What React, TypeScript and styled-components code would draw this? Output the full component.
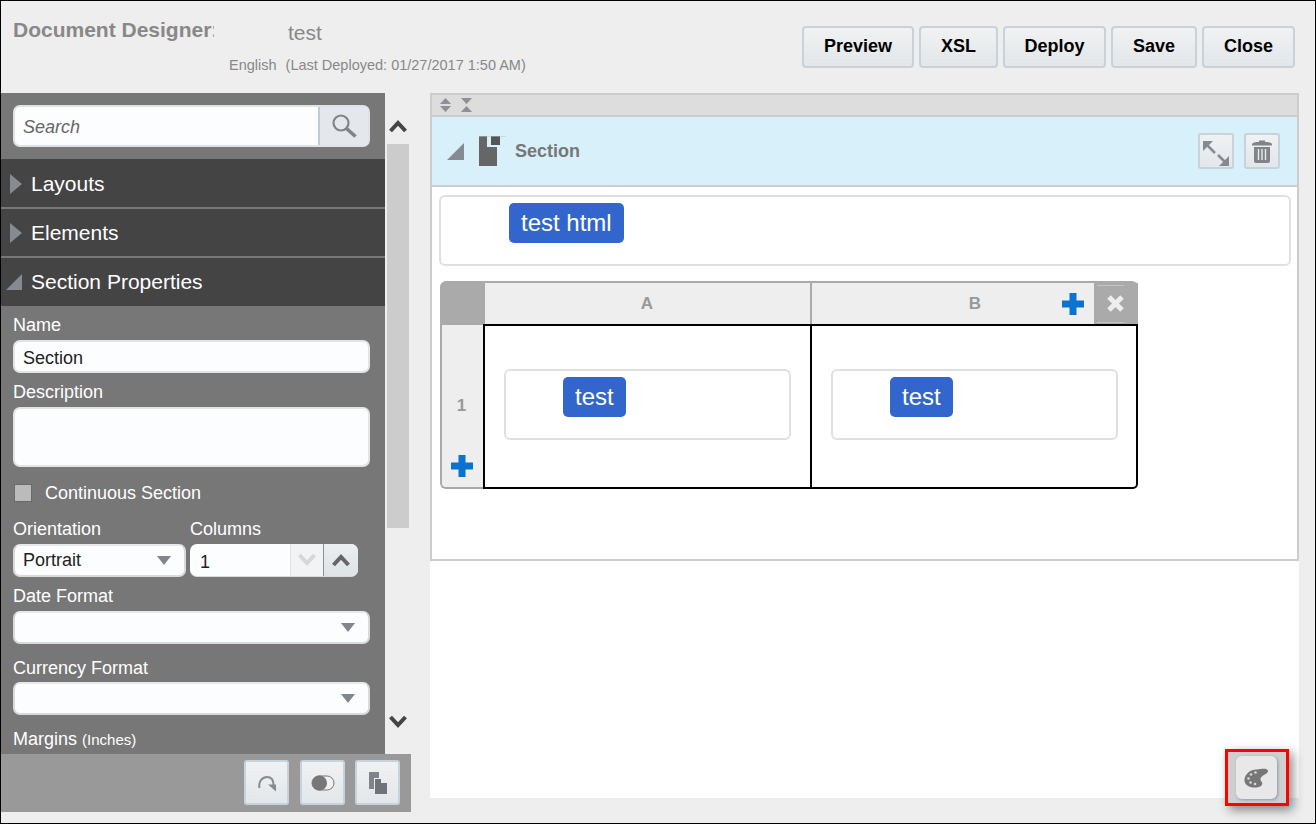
import React from 'react';
import styled, { createGlobalStyle } from 'styled-components';

const Global = createGlobalStyle`
  html, body { margin: 0; padding: 0; background: #eeeeee; }
  * { box-sizing: border-box; }
  body { font-family: "Liberation Sans", Arial, sans-serif; }
`;

const Page = styled.div`
  position: relative;
  width: 1316px;
  height: 824px;
  border: 1px solid #000;
  background: #eeeeee;
  overflow: hidden;
`;

const Header = styled.header`
  display: flex;
  height: 92px;
`;

const Title = styled.div`
  width: 213px;
  padding: 16px 0 0 12px;
  font-size: 21px;
  line-height: 26px;
  font-weight: 700;
  color: #888;
  white-space: nowrap;
  overflow: hidden;
`;

const Info = styled.div`
  padding: 19px 0 0 15px;
  flex: 1;
`;

const DocName = styled.div`
  padding-left: 59px;
  font-size: 21px;
  line-height: 26px;
  color: #888;
`;

const Meta = styled.div`
  margin-top: 9px;
  display: flex;
  gap: 9px;
  font-size: 14.5px;
  line-height: 20px;
  color: #888;
`;

const Actions = styled.div`
  display: flex;
  gap: 5px;
  margin: 25px 20px 0 0;
`;

const ActionButton = styled.button<{ $w: number }>`
  width: ${p => p.$w}px;
  height: 42px;
  padding: 0 0 2px;
  border: 2px solid #c8d2da;
  border-radius: 4px;
  background: linear-gradient(#f0f1f2, #e3e7ea);
  font-family: inherit;
  font-size: 18px;
  font-weight: 700;
  color: #000;
`;

const Main = styled.div`
  display: flex;
  height: 730px;
`;

const SideColumn = styled.div`
  width: 410px;
  display: flex;
  flex-direction: column;
`;

const SideTop = styled.div`
  display: flex;
  height: 661px;
`;

const Panel = styled.aside`
  width: 384px;
  background: #777;
  overflow: hidden;
`;

const SearchArea = styled.div`
  height: 66px;
  padding: 12px 15px 0 12px;
`;

const SearchBox = styled.div`
  display: flex;
  height: 42px;
  border: 2px solid #dfe3e7;
  border-radius: 7px;
  overflow: hidden;
  background: #fcfdff;
`;

const SearchText = styled.div`
  flex: 1;
  padding-left: 8px;
  font-size: 18px;
  line-height: 40px;
  font-style: italic;
  color: #666;
`;

const SearchButton = styled.div`
  width: 50px;
  display: flex;
  align-items: center;
  justify-content: center;
  background: #e4e8ec;
  border-left: 2px solid #bfccd6;
`;

const AccordionRow = styled.div<{ $h: number; $line?: boolean; $pad?: number }>`
  display: flex;
  align-items: center;
  height: ${p => p.$h}px;
  padding-top: ${p => p.$pad ?? 0}px;
  background: #444;
  border-bottom: ${p => (p.$line ? '2px solid #777' : '0')};
  color: #fff;
  font-size: 21px;
`;

const ArrowSlot = styled.span`
  width: 30px;
  display: flex;
  justify-content: flex-end;
  padding-right: 9px;
`;

const Form = styled.div`
  padding: 0 15px 0 12px;
  height: 448px;
  overflow: hidden;
`;

const Label = styled.div<{ $top: number; $bottom?: number }>`
  margin-top: ${p => p.$top}px;
  margin-bottom: ${p => p.$bottom ?? 3}px;
  font-size: 18px;
  line-height: 24px;
  color: #fff;
  white-space: nowrap;
`;

const Small = styled.span`
  font-size: 15px;
`;

const TextField = styled.div<{ $h: number }>`
  height: ${p => p.$h}px;
  padding-left: 8px;
  border: 2px solid #e2e4e6;
  border-radius: 7px;
  background: #fcfdff;
  font-size: 18px;
  line-height: 32px;
  color: #222;
`;

const SelectField = styled.div<{ $w?: number }>`
  width: ${p => (p.$w ? `${p.$w}px` : 'auto')};
  height: 33px;
  display: flex;
  align-items: center;
  justify-content: space-between;
  padding: 0 13px 0 8px;
  border: 2px solid #d8dbde;
  border-top-color: #e6e8ea;
  border-radius: 7px;
  background: #fcfdff;
  font-size: 18px;
  color: #222;
`;

const CheckRow = styled.div`
  display: flex;
  align-items: center;
  gap: 13px;
  height: 18px;
  margin-top: 17px;
  padding-left: 1px;
  font-size: 18px;
  color: #fff;
`;

const Check = styled.span`
  width: 18px;
  height: 18px;
  background: #bbb;
  border: 1px solid #6a6a6a;
`;

const TwoColumns = styled.div`
  display: flex;
  gap: 4px;
`;

const Spinner = styled.div`
  width: 168px;
  height: 33px;
  display: flex;
  border-radius: 7px;
  overflow: hidden;
  background: #fcfdff;
  border-bottom: 1px solid #d8dbde;
`;

const SpinnerValue = styled.div`
  width: 100px;
  padding: 6px 0 0 10px;
  font-size: 18px;
  line-height: 24px;
  color: #222;
`;

const SpinButton = styled.div<{ $on?: boolean }>`
  flex: ${p => (p.$on ? '0 0 35px' : '1')};
  display: flex;
  align-items: center;
  justify-content: center;
  background: ${p => (p.$on ? 'linear-gradient(#eceef0, #dfe3e6)' : '#f1f3f5')};
  border-left: ${p => (p.$on ? '1px solid #8f8f8f' : '1px solid #dde1e5')};
`;

const ScrollRail = styled.div`
  width: 26px;
  display: flex;
  flex-direction: column;
  align-items: center;
`;

const ScrollEnd = styled.div<{ $bottom?: boolean }>`
  height: ${p => (p.$bottom ? 'auto' : '51px')};
  flex: ${p => (p.$bottom ? 1 : 'none')};
  display: flex;
  align-items: ${p => (p.$bottom ? 'flex-end' : 'flex-start')};
  padding: ${p => (p.$bottom ? '0 0 25px' : '26px 0 0')};
`;

const ScrollThumb = styled.div`
  width: 22px;
  height: 384px;
  background: #ccc;
`;

const BottomBar = styled.div`
  height: 58px;
  display: flex;
  justify-content: flex-end;
  gap: 10px;
  padding: 6px 11px 0 0;
  background: #999;
`;

const ToolButton = styled.div`
  width: 45px;
  height: 45px;
  display: flex;
  align-items: center;
  justify-content: center;
  border: 2px solid #c8d2da;
  border-radius: 3px;
  background: linear-gradient(#f0f1f2, #e3e7ea);
  &:first-child { margin-right: 1px; }
`;

const Canvas = styled.main`
  width: 869px;
  height: 705px;
  margin-left: 19px;
  background: #fff;
`;

const Section = styled.section`
  height: 468px;
  border: 2px solid #ccc;
`;

const SectionTools = styled.div`
  height: 22px;
  display: flex;
  align-items: center;
  gap: 10px;
  padding-left: 8px;
  background: #ddd;
  border-bottom: 2px solid #ccc;
`;

const SectionHead = styled.div`
  height: 70px;
  display: flex;
  align-items: center;
  padding: 0 17px 0 15px;
  background: #d7f0fa;
  border-bottom: 2px solid #ccc;
`;

const SectionIcon = styled.svg`
  margin-left: 15px;
`;

const SectionName = styled.div`
  flex: 1;
  margin-left: 9px;
  font-size: 18px;
  font-weight: 700;
  color: #777;
`;

const HeadButton = styled.div`
  width: 36px;
  height: 36px;
  margin-left: 10px;
  display: flex;
  align-items: center;
  justify-content: center;
  border: 2px solid #c8d2da;
  border-radius: 3px;
  background: linear-gradient(#f0f1f2, #e3e7ea);
`;

const SectionBody = styled.div`
  padding: 8px 6px 0 7px;
`;

const DropBox = styled.div<{ $h: number; $l: number }>`
  height: ${p => p.$h}px;
  padding: 6px 0 0 ${p => p.$l}px;
  border: 2px solid #e0e0e0;
  border-radius: 6px;
  background: #fff;
`;

const Chip = styled.span`
  display: inline-block;
  height: 40px;
  padding: 0 12px;
  border-radius: 5px;
  background: #3366cc;
  color: #fff;
  font-size: 24px;
  line-height: 40px;
`;

const Table = styled.div`
  position: relative;
  width: 698px;
  margin: 15px 0 0 1px;
  display: grid;
  grid-template-columns: 44px 326px 328px;
  grid-template-rows: 43px 165px;
`;

const Corner = styled.div`
  position: relative;
  z-index: 1;
  background: #aaa;
  border-radius: 6px 0 0 0;
  height: 44px;
  width: 45px;
`;

const ColHead = styled.div<{ $last?: boolean }>`
  display: flex;
  align-items: center;
  justify-content: center;
  background: #eee;
  border-top: 2px solid #aaa;
  border-left: ${p => (p.$last ? '2px solid #aaa' : '0')};
  border-top-right-radius: ${p => (p.$last ? '6px' : '0')};
  font-size: 17px;
  font-weight: 700;
  color: #999;
`;

const RowHead = styled.div`
  display: flex;
  flex-direction: column;
  align-items: center;
  padding: 73px 3px 0 0;
  background: #eee;
  border-left: 2px solid #aaa;
  border-bottom: 2px solid #aaa;
  border-bottom-left-radius: 6px;
  font-size: 17px;
  font-weight: 700;
  line-height: 18px;
  color: #999;
`;

const RowPlus = styled.div`
  margin-top: 40px;
  height: 24px;
`;

const Grid = styled.div`
  grid-column: 2 / 4;
  display: grid;
  grid-template-columns: 326px 1fr;
  border: 2px solid #000;
  border-left-width: 1px;
  border-radius: 0 0 5px 0;
  margin-left: -1px;
  background: #fff;
  position: relative;
  z-index: 2;
`;

const Cell = styled.div`
  padding: 43px 0 0 19px;
  border-left: 2px solid #000;
  &:first-child { border-left: 1px solid #000; }
`;

const CellBox = styled.div`
  width: 287px;
`;

const ColPlus = styled.div`
  position: absolute;
  left: 622px;
  top: 12px;
  line-height: 0;
`;

const ColClose = styled.div`
  position: absolute;
  right: 0;
  top: 2px;
  width: 44px;
  height: 41px;
  display: flex;
  align-items: center;
  justify-content: center;
  padding-right: 2px;
  background: #aaa;
  &::before, &::after {
    content: "";
    position: absolute;
    left: 3px;
    width: 27px;
    height: 1px;
    background: #c4c4c4;
  }
  &::before { top: 2px; }
  &::after { bottom: 1px; }
`;

const PaletteFrame = styled.div`
  position: absolute;
  left: 1224px;
  top: 748px;
  width: 64px;
  height: 57px;
  display: flex;
  align-items: center;
  justify-content: center;
  border: 3px solid #f00;
  background: #cfcfcf;
  box-shadow: 4px 4px 10px rgba(0, 0, 0, 0.45);
`;

const PaletteButton = styled.div`
  width: 41px;
  height: 43px;
  margin-right: 1px;
  padding-right: 2px;
  display: flex;
  align-items: center;
  justify-content: center;
  border-radius: 6px;
  background: #e8e8e8;
  box-shadow: 1px 1px 3px rgba(110, 130, 150, 0.7);
`;

const Right = () => (
  <svg width="12" height="20" viewBox="0 0 12 20"><path d="M0 0L12 10L0 20Z" fill="#858b90" /></svg>
);
const Open = () => (
  <svg width="16" height="16" viewBox="0 0 16 16"><path d="M16 0V16H0Z" fill="#858b90" /></svg>
);
const Caret = () => (
  <svg width="14" height="9" viewBox="0 0 14 9"><path d="M0 0H14L7 9Z" fill="#7f868c" /></svg>
);
const Chevron = ({ up, color = '#444' }: { up: boolean; color?: string }) => (
  <svg width="18" height="14" viewBox="0 0 18 14">
    <path d={up ? 'M1.500 12L9 4L16.500 12' : 'M1.500 2L9 10L16.500 2'} fill="none" stroke={color} strokeWidth={4} />
  </svg>
);
const Plus = () => (
  <svg width="22" height="22" viewBox="0 0 22 22"><path d="M7.500 0H14.500V7.500H22V14.500H14.500V22H7.500V14.500H0V7.500H7.500Z" fill="#0a72cf" /></svg>
);

const labels = [
  { t: 'Preview', w: 112 },
  { t: 'XSL', w: 79 },
  { t: 'Deploy', w: 103 },
  { t: 'Save', w: 86 },
  { t: 'Close', w: 93 },
];

export default function App() {
  return (
    <Page>
      <Global />
      <Header>
        <Title>Document Designer:</Title>
        <Info>
          <DocName>test</DocName>
          <Meta>
            <span>English</span>
            <span>(Last Deployed: 01/27/2017 1:50 AM)</span>
          </Meta>
        </Info>
        <Actions>
          {labels.map(b => (
            <ActionButton key={b.t} $w={b.w}>{b.t}</ActionButton>
          ))}
        </Actions>
      </Header>
      <Main>
        <SideColumn>
          <SideTop>
            <Panel>
              <SearchArea>
                <SearchBox>
                  <SearchText>Search</SearchText>
                  <SearchButton>
                    <svg width="26" height="26" viewBox="0 0 26 26">
                      <circle cx="10" cy="10" r="7.500" fill="none" stroke="#808488" strokeWidth="2.200" />
                      <path d="M15.500 15.500L24.500 23.500" stroke="#808488" strokeWidth="3.600" />
                    </svg>
                  </SearchButton>
                </SearchBox>
              </SearchArea>
              <AccordionRow $h={50} $line $pad={2}><ArrowSlot><Right /></ArrowSlot>Layouts</AccordionRow>
              <AccordionRow $h={49} $line><ArrowSlot><Right /></ArrowSlot>Elements</AccordionRow>
              <AccordionRow $h={48}><ArrowSlot><Open /></ArrowSlot>Section Properties</AccordionRow>
              <Form>
                <Label $top={7}>Name</Label>
                <TextField $h={33}>Section</TextField>
                <Label $top={7}>Description</Label>
                <TextField $h={60} />
                <CheckRow><Check />Continuous Section</CheckRow>
                <TwoColumns>
                  <div>
                    <Label $top={15}>Orientation</Label>
                    <SelectField $w={173}>Portrait<Caret /></SelectField>
                  </div>
                  <div>
                    <Label $top={15}>Columns</Label>
                    <Spinner>
                      <SpinnerValue>1</SpinnerValue>
                      <SpinButton><Chevron up={false} color="#d5d8da" /></SpinButton>
                      <SpinButton $on><Chevron up color="#666" /></SpinButton>
                    </Spinner>
                  </div>
                </TwoColumns>
                <Label $top={7}>Date Format</Label>
                <SelectField><span /><Caret /></SelectField>
                <Label $top={12} $bottom={2}>Currency Format</Label>
                <SelectField><span /><Caret /></SelectField>
                <Label $top={12}>Margins <Small>(Inches)</Small></Label>
              </Form>
            </Panel>
            <ScrollRail>
              <ScrollEnd><Chevron up /></ScrollEnd>
              <ScrollThumb />
              <ScrollEnd $bottom><Chevron up={false} /></ScrollEnd>
            </ScrollRail>
          </SideTop>
          <BottomBar>
            <ToolButton>
              <svg width="20" height="20" viewBox="0 0 20 20">
                <path d="M2.500 15C1 8 6 4 10 4C14 4 16.500 7 16.500 12" fill="none" stroke="#858b90" strokeWidth="2" />
                <path d="M11 11.500H19V18.500Z" fill="#858b90" />
              </svg>
            </ToolButton>
            <ToolButton>
              <svg width="24" height="16" viewBox="0 0 24 16">
                <rect x="1" y="1" width="22" height="14" rx="7" fill="#f0f1f2" stroke="#777" strokeWidth="1" />
                <circle cx="8.500" cy="8" r="7.500" fill="#777" />
              </svg>
            </ToolButton>
            <ToolButton>
              <svg width="18" height="22" viewBox="0 0 18 22">
                <path d="M0 0H10V6H5V17H0Z" fill="#808488" />
                <path d="M6 7H12V11H18V22H6Z" fill="#707478" />
              </svg>
            </ToolButton>
          </BottomBar>
        </SideColumn>
        <Canvas>
          <Section>
            <SectionTools>
              <svg width="11" height="14" viewBox="0 0 11 14"><path d="M5.500 0L11 6H0ZM0 8H11L5.500 14Z" fill="#8d9094" /></svg>
              <svg width="11" height="14" viewBox="0 0 11 14"><path d="M0 0H11L5.500 6ZM5.500 8L11 14H0Z" fill="#8d9094" /></svg>
            </SectionTools>
            <SectionHead>
              <svg width="17" height="17" viewBox="0 0 17 17"><path d="M17 0V17H0Z" fill="#858b90" /></svg>
              <SectionIcon width="27" height="30" viewBox="0 0 27 30">
                <path d="M0 0H8V11H18V30H0Z" fill="#666" />
                <rect x="12" y="0" width="9" height="9" fill="#555" />
                <path d="M0 0.300H27" stroke="#b8c4cc" strokeWidth="0.600" />
              </SectionIcon>
              <SectionName>Section</SectionName>
              <HeadButton>
                <svg width="30" height="32" viewBox="0 0 30 32">
                  <path d="M2 6H12L2 16Z M28 31H18L28 21Z" fill="#858b90" />
                  <path d="M5 9L14 18M25 28L17 20" stroke="#858b90" strokeWidth="2.500" />
                </svg>
              </HeadButton>
              <HeadButton>
                <svg width="20" height="24" viewBox="0 0 20 24">
                  <path d="M0 5.500C0 3.500 4 3 7 3V1.500H13V3C16 3 20 3.500 20 5.500V6.500H0Z" fill="#808488" />
                  <path d="M2 8H18V22Q18 24 16 24H4Q2 24 2 22Z" fill="#808488" />
                  <path d="M6.500 10V21M10 10V21M13.500 10V21" stroke="#e8eaec" strokeWidth="1.400" />
                </svg>
              </HeadButton>
            </SectionHead>
            <SectionBody>
              <DropBox $h={71} $l={68}><Chip>test html</Chip></DropBox>
              <Table>
                <Corner />
                <ColHead>A</ColHead>
                <ColHead $last>B</ColHead>
                <RowHead>
                  1
                  <RowPlus><Plus /></RowPlus>
                </RowHead>
                <Grid>
                  <Cell>
                    <CellBox><DropBox $h={71} $l={57}><Chip>test</Chip></DropBox></CellBox>
                  </Cell>
                  <Cell>
                    <CellBox><DropBox $h={71} $l={57}><Chip>test</Chip></DropBox></CellBox>
                  </Cell>
                </Grid>
                <ColPlus><Plus /></ColPlus>
                <ColClose>
                  <svg width="19" height="19" viewBox="0 0 19 19">
                    <path d="M3 3L16 16M16 3L3 16" stroke="#eeeeee" strokeWidth="5" />
                  </svg>
                </ColClose>
              </Table>
            </SectionBody>
          </Section>
        </Canvas>
      </Main>
      <PaletteFrame>
        <PaletteButton>
          <svg width="24" height="20" viewBox="0 0 24 20">
            <path d="M0.500 13C0 6 7 1 13 1.500C17 1 23 -0.500 24 2.500C24.500 6 17.500 7 16.500 10.500C16 14 20 14.500 17.500 17.500C14 21 1.500 20.500 0.500 13Z" fill="#777" />
            <circle cx="4.500" cy="10.500" r="1.300" fill="#d8d8d8" />
            <circle cx="7" cy="6.500" r="1.300" fill="#d8d8d8" />
            <circle cx="11.500" cy="4.500" r="1.300" fill="#d8d8d8" />
            <circle cx="6.500" cy="14.500" r="1.300" fill="#d8d8d8" />
            <circle cx="11" cy="16" r="1.300" fill="#d8d8d8" />
          </svg>
        </PaletteButton>
      </PaletteFrame>
    </Page>
  );
}
